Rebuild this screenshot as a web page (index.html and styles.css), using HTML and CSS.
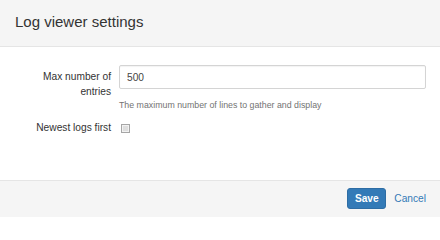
FILE: index.html
```html
<!DOCTYPE html>
<html lang="en">
<head>
<meta charset="utf-8">
<title>Log viewer settings</title>
<link rel="stylesheet" href="styles.css">
</head>
<body>
<div class="modal">
  <div class="modal-header">
    <h3 class="modal-title">Log viewer settings</h3>
  </div>
  <div class="modal-body">
    <div class="form-row">
      <label class="form-label" for="max">Max number of entries</label>
      <div class="form-field">
        <input id="max" class="text-input" type="text" value="500">
        <div class="help">The maximum number of lines to gather and display</div>
      </div>
    </div>
    <div class="form-row">
      <label class="form-label">Newest logs first</label>
      <div class="form-field">
        <span class="checkbox"></span>
      </div>
    </div>
  </div>
  <div class="modal-footer">
    <button class="btn-save" type="button">Save</button>
    <a class="btn-cancel" href="#">Cancel</a>
  </div>
</div>
</body>
</html>
```

FILE: styles.css
```css
* { box-sizing: border-box; }
html, body { margin: 0; padding: 0; background: #fff; }
body {
  font-family: "Liberation Sans", Arial, sans-serif;
  font-size: 10.2px;
  line-height: 14.6px;
  color: #333;
}
.modal {
  width: 440px;
  height: 217px;
  display: flex;
  flex-direction: column;
}
.modal-header {
  height: 47px;
  background: #f5f5f5;
  border-bottom: 1px solid #e5e5e5;
  padding: 12px 15px 0;
}
.modal-title {
  margin: 0;
  font-size: 15px;
  font-weight: normal;
  line-height: 20px;
  color: #333;
}
.modal-body {
  flex: 1;
  padding: 18px 14px 0 0;
}
.form-row {
  display: grid;
  grid-template-columns: 111px 1fr;
  column-gap: 8px;
  margin-bottom: 4px;
}
.form-label {
  text-align: right;
  padding-top: 5px;
  padding-left: 30px;
}
.form-field {
  display: flex;
  flex-direction: column;
  align-items: flex-start;
}
.text-input {
  width: 100%;
  height: 24px;
  margin: 0;
  border: 1px solid #d4d4d4;
  border-radius: 2px;
  padding: 0 7px;
  font-family: inherit;
  font-size: 10.2px;
  color: #444;
  background: #fff;
  box-shadow: inset 0 1px 1px rgba(0,0,0,0.05);
  outline: none;
}
.help {
  margin-top: 10px;
  font-size: 8.8px;
  line-height: 12.6px;
  color: #737373;
}
.checkbox {
  display: block;
  width: 9px;
  height: 9px;
  margin: 8px 0 0 2px;
  border: 1px solid #a6a6a6;
  background: #dedede;
  box-shadow: inset 0 0 0 1px #f2f2f2;
}
.modal-footer {
  height: 37px;
  background: #f5f5f5;
  border-top: 1px solid #e5e5e5;
  padding: 7px 14px 0 0;
  display: flex;
  justify-content: flex-end;
  align-items: flex-start;
  gap: 8px;
}
.btn-save {
  height: 21px;
  width: 39px;
  padding: 0;
  margin: 0;
  background: #337ab7;
  border: 1px solid #2e6da4;
  border-radius: 3px;
  color: #fff;
  font-family: inherit;
  font-weight: bold;
  font-size: 10.2px;
  line-height: 19px;
}
.btn-cancel {
  color: #337ab7;
  text-decoration: none;
  line-height: 21px;
}
```
